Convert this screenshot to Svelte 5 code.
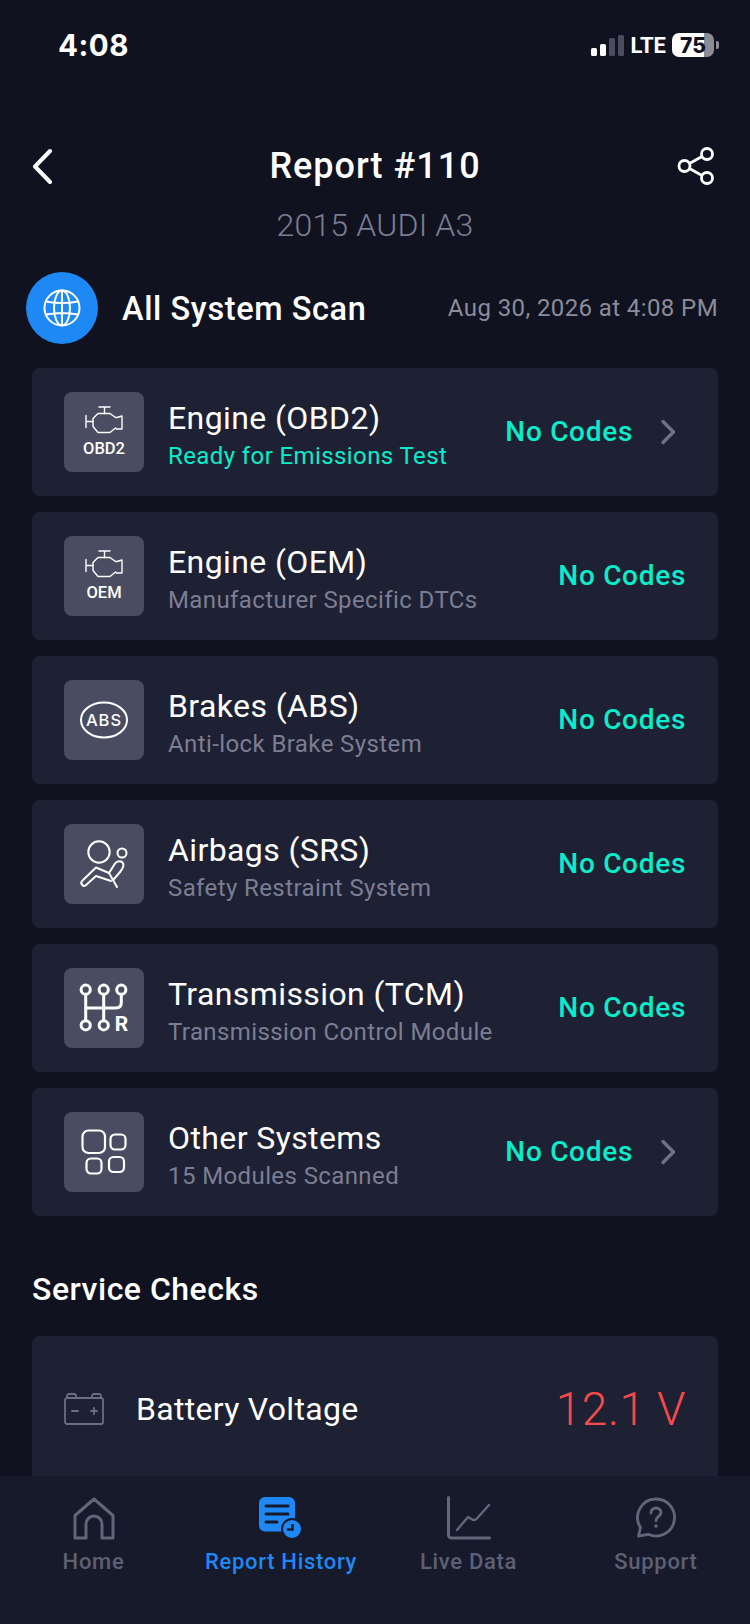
<script>
  const systems = [
    { id: "obd", title: "Engine (OBD2)", sub: "Ready for Emissions Test", ok: true, chevron: true, label: "OBD2" },
    { id: "oem", title: "Engine (OEM)", sub: "Manufacturer Specific DTCs", label: "OEM" },
    { id: "abs", title: "Brakes (ABS)", sub: "Anti-lock Brake System" },
    { id: "srs", title: "Airbags (SRS)", sub: "Safety Restraint System" },
    { id: "tcm", title: "Transmission (TCM)", sub: "Transmission Control Module" },
    { id: "other", title: "Other Systems", sub: "15 Modules Scanned", chevron: true },
  ];
</script>

{#snippet engine()}
  <svg viewBox="0 0 38 28" width="38" height="28" fill="none" stroke="#fff" stroke-width="1.400" stroke-linejoin="round" stroke-linecap="round">
    <path d="M14 1h11M19.500 1v6.500M1 9.500v12M1 15.500h7" />
    <path d="M8 12.500l5-5h12l5.500 4h1.500l5-1.500v13h-5.500l-1-1-5.500 4.500H13l-5-6z" />
  </svg>
{/snippet}

<div class="page">
  <div class="status">
    <span class="time">4:08</span>
    <div class="status-right">
      <svg width="33" height="21" viewBox="0 0 33 21">
        <rect x="0" y="13" width="6" height="8" rx="1.500" fill="#fff" />
        <rect x="9" y="9" width="6" height="12" rx="1.500" fill="#fff" />
        <rect x="18" y="3" width="6" height="18" rx="1.500" fill="#4b4d5c" />
        <rect x="27" y="0" width="6" height="21" rx="1.500" fill="#4b4d5c" />
      </svg>
      <span class="lte">LTE</span>
      <div class="battery"><span class="level">75</span></div>
      <span class="nub"></span>
    </div>
  </div>

  <header class="nav">
    <svg width="26" height="36" viewBox="0 0 26 36" fill="none" stroke="#fff" stroke-width="4" stroke-linecap="round" stroke-linejoin="round">
      <path d="M20 3 5 18.500 20 34" />
    </svg>
    <h1>Report #110</h1>
    <svg class="share" width="38" height="38" viewBox="0 0 38 38" fill="none" stroke="#fff" stroke-width="2.800">
      <circle cx="7.500" cy="19" r="5.500" />
      <circle cx="30" cy="7" r="5.500" />
      <circle cx="30" cy="31" r="5.500" />
      <path d="M12.500 16.500 25 9.500M12.500 21.500 25 28.500" />
    </svg>
  </header>
  <p class="vehicle">2015 AUDI A3</p>

  <div class="scan">
    <div class="globe">
      <svg width="40" height="40" viewBox="0 0 40 40" fill="none" stroke="#fff" stroke-width="2">
        <circle cx="20" cy="20" r="17.500" />
        <ellipse cx="20" cy="20" rx="8" ry="17.500" />
        <path d="M4 13.500c10 2 22 2 32 0M4 26.500c10-2 22-2 32 0M20 2.500v35" />
      </svg>
    </div>
    <span class="scan-title">All System Scan</span>
    <span class="scan-date">Aug 30, 2026 at 4:08 PM</span>
  </div>

  <div class="list">
    {#each systems as s}
      <div class="card">
        <div class="tile">
          {#if s.label}
            {@render engine()}
            <span class="tile-label">{s.label}</span>
          {:else if s.id === "abs"}
            <svg width="80" height="80" viewBox="0 0 80 80" fill="none">
              <ellipse cx="40" cy="40" rx="23" ry="17.500" stroke="#fff" stroke-width="2" />
              <text class="abs" x="40" y="46" text-anchor="middle">ABS</text>
            </svg>
          {:else if s.id === "srs"}
            <svg width="80" height="80" viewBox="0 0 80 80" fill="none" stroke="#fff" stroke-width="2" stroke-linecap="round" stroke-linejoin="round">
              <circle cx="35" cy="28" r="10.700" />
              <circle cx="58" cy="29" r="4.500" />
              <path d="M45 49 32 43.500 18 57c-2 2.500 1 6 3.500 4.500L32 52l15 5" />
              <path d="M45 49l6-9.500c2-3 7-3 8.200.2 1 2.800-.7 5-2.700 7.800L50 55" />
              <path d="M45 49l8 14" />
            </svg>
          {:else if s.id === "tcm"}
            <svg width="80" height="80" viewBox="0 0 80 80" fill="none" stroke="#fff" stroke-width="3" stroke-linecap="round" stroke-linejoin="round">
              <circle cx="21.700" cy="21.700" r="4.600" />
              <circle cx="39.700" cy="21.700" r="4.600" />
              <circle cx="57.300" cy="21.700" r="4.600" />
              <circle cx="21.700" cy="57.300" r="4.600" />
              <circle cx="39.700" cy="57.300" r="4.600" />
              <path d="M21.700 26.300v26.400M39.700 26.300v26.400M21.700 40h30c3.500 0 5.600-2 5.600-5.500v-8.200" />
              <text class="gear" x="57.500" y="63" text-anchor="middle">R</text>
            </svg>
          {:else}
            <svg width="46" height="46" viewBox="0 0 46 46" fill="none" stroke="#fff" stroke-width="2.200">
              <rect x="1.500" y="1.500" width="22.500" height="22.500" rx="6" />
              <rect x="29.500" y="5.500" width="15" height="15" rx="4.500" />
              <rect x="5.500" y="29.500" width="15" height="15" rx="4.500" />
              <rect x="28" y="28" width="15" height="15" rx="4.500" />
            </svg>
          {/if}
        </div>
        <div class="text">
          <div class="title">{s.title}</div>
          <div class="sub" class:ok={s.ok}>{s.sub}</div>
        </div>
        <span class="codes">No Codes</span>
        {#if s.chevron}
          <svg class="chev" width="18" height="26" viewBox="0 0 18 26" fill="none" stroke="#6f7186" stroke-width="3.400" stroke-linecap="round" stroke-linejoin="round">
            <path d="M4 2.500 14.500 13 4 23.500" />
          </svg>
        {/if}
      </div>
    {/each}
  </div>

  <h2>Service Checks</h2>

  <div class="service">
    <svg width="40" height="32" viewBox="0 0 40 32" fill="none" stroke="#6b6d82" stroke-width="1.800" stroke-linecap="round" stroke-linejoin="round">
      <path d="M3 5h34a2 2 0 0 1 2 2v22a2 2 0 0 1-2 2H3a2 2 0 0 1-2-2V7a2 2 0 0 1 2-2z" />
      <path d="M3 5V3a2 2 0 0 1 2-2h5a2 2 0 0 1 2 2v2M28 5V3a2 2 0 0 1 2-2h5a2 2 0 0 1 2 2v2" />
      <path d="M8 18h6M27 18h6M30 15v6" />
    </svg>
    <span class="service-name">Battery Voltage</span>
    <span class="volt">12.1 V</span>
  </div>

  <nav class="tabs">
    <div class="tab">
      <svg width="44" height="44" viewBox="0 0 44 44" fill="none" stroke="#63657a" stroke-width="3" stroke-linejoin="round">
        <path d="M3 42V19.500L22 3l19 16.500V42H30V28a8 8 0 0 0-16 0v14z" />
      </svg>
      <span>Home</span>
    </div>
    <div class="tab active">
      <svg width="44" height="44" viewBox="0 0 44 44">
        <rect x="0" y="1" width="36" height="34.500" rx="6" fill="#1e88f5" />
        <path d="M7 10h22M7 18h22M7 26h11" stroke="#171a2a" stroke-width="3" stroke-linecap="round" />
        <circle cx="33" cy="33" r="10" fill="#1e88f5" stroke="#171a2a" stroke-width="2" />
        <path d="M33.500 28v5.500H28" fill="none" stroke="#171a2a" stroke-width="2.500" />
      </svg>
      <span>Report History</span>
    </div>
    <div class="tab">
      <svg width="44" height="44" viewBox="0 0 44 44" fill="none" stroke="#63657a" stroke-width="3" stroke-linecap="round" stroke-linejoin="round">
        <path d="M1.500 1.500V39a3 3 0 0 0 3 3h38" />
        <path d="M10 34l11-13 5 3 3-.5L42 9" stroke-width="2.400" />
      </svg>
      <span>Live Data</span>
    </div>
    <div class="tab">
      <svg width="44" height="44" viewBox="0 0 44 44" fill="none" stroke="#63657a" stroke-width="2.800" stroke-linejoin="round">
        <path d="M22 3a18.500 18.500 0 1 1-7.500 35.400L4.500 40l2-8.500A18.500 18.500 0 0 1 22 3z" />
        <path d="M17 17c0-3 2.200-5 5-5s5 2 5 4.600c0 3.800-5 3.800-5 8.200" stroke-linecap="round" />
        <circle cx="22" cy="30" r="1.800" fill="#63657a" stroke="none" />
      </svg>
      <span>Support</span>
    </div>
  </nav>
</div>

<style>
  :global(body) {
    margin: 0;
    background: #10131f;
  }

  .page {
    position: relative;
    width: 750px;
    height: 1624px;
    overflow: hidden;
    background: #10131f;
    color: #fff;
    font-family: Roboto, "Liberation Sans", sans-serif;
  }

  .status {
    height: 90px;
    box-sizing: border-box;
    padding: 0 31px 0 58px;
    display: flex;
    justify-content: space-between;
    align-items: center;
  }

  .time {
    font-family: Inter, sans-serif;
    font-size: 29.500px;
    font-weight: 700;
    letter-spacing: 0.5px;
  }

  .status-right {
    display: flex;
    align-items: center;
  }

  .lte {
    margin-left: 7px;
    font-size: 22px;
    font-weight: 700;
  }

  .battery {
    margin-left: 6px;
    width: 42px;
    height: 24px;
    border-radius: 7px;
    background: linear-gradient(90deg, #fff 0 76%, #8b8c95 76%);
    display: flex;
    justify-content: center;
    align-items: center;
  }

  .level {
    color: #10131f;
    font-family: Inter, sans-serif;
    font-size: 21px;
    font-weight: 800;
    line-height: 1;
  }

  .nub {
    margin-left: 2px;
    width: 3px;
    height: 8px;
    border-radius: 0 2px 2px 0;
    background: #8b8c95;
  }

  .nav {
    height: 60px;
    margin-top: 46px;
    padding: 0 35px 0 30px;
    display: grid;
    grid-template-columns: 1fr auto 1fr;
    align-items: center;
  }

  .share {
    justify-self: end;
  }

  h1 {
    margin: 0 0 0 5px;
    font-size: 36px;
    font-weight: 500;
    letter-spacing: 1px;
  }

  .vehicle {
    margin: 7px 0 0;
    color: #7b7e93;
    font-size: 32px;
    font-weight: 300;
    line-height: 44px;
    letter-spacing: 0.2px;
    text-align: center;
  }

  .scan {
    margin-top: 25px;
    padding: 0 32px 0 26px;
    display: flex;
    align-items: center;
  }

  .globe {
    width: 72px;
    height: 72px;
    border-radius: 50%;
    background: #1e88f5;
    display: flex;
    justify-content: center;
    align-items: center;
  }

  .scan-title {
    margin-left: 24px;
    padding-top: 2px;
    font-size: 32.500px;
    font-weight: 500;
    letter-spacing: 0.6px;
  }

  .scan-date {
    margin-left: auto;
    color: #8a8c9b;
    font-size: 24px;
    letter-spacing: 0.4px;
  }

  .list {
    margin: 24px 32px 0;
    display: flex;
    flex-direction: column;
    gap: 16px;
  }

  .card {
    height: 128px;
    box-sizing: border-box;
    padding: 0 32px;
    border-radius: 8px;
    background: #1e2133;
    display: flex;
    align-items: center;
  }

  .tile {
    flex: none;
    width: 80px;
    height: 80px;
    border-radius: 8px;
    background: #4a4d62;
    display: flex;
    flex-direction: column;
    justify-content: center;
    align-items: center;
  }

  .tile-label {
    margin-top: 6px;
    font-size: 16.500px;
    font-weight: 500;
    line-height: 18px;
  }

  .abs {
    fill: #fff;
    font-family: Inter, sans-serif;
    font-size: 16.500px;
    font-weight: 500;
    letter-spacing: 1px;
  }

  .gear {
    fill: #fff;
    stroke: none;
    font-size: 21px;
    font-weight: 700;
  }

  .text {
    margin-left: 24px;
    padding-top: 4px;
    flex: 1;
    min-width: 0;
  }

  .title {
    font-size: 32px;
    line-height: 40px;
    letter-spacing: 0.4px;
  }

  .sub {
    margin-top: 3px;
    color: #7b7e93;
    font-size: 24px;
    line-height: 30px;
    letter-spacing: 0.4px;
  }

  .sub.ok {
    color: #0aecca;
  }

  .codes {
    margin-bottom: 1px;
    color: #0aecca;
    font-size: 28px;
    font-weight: 500;
    letter-spacing: 0.7px;
  }

  .chev {
    margin-left: 26px;
    margin-right: 9px;
  }

  h2 {
    margin: 53px 32px 0;
    font-size: 32px;
    font-weight: 500;
    line-height: 40px;
    letter-spacing: 0.5px;
  }

  .service {
    margin: 27px 32px 0;
    height: 146px;
    box-sizing: border-box;
    padding: 0 32px;
    border-radius: 8px;
    background: #1e2133;
    display: flex;
    align-items: center;
  }

  .service-name {
    margin-left: 32px;
    font-size: 32px;
    letter-spacing: 0.3px;
  }

  .volt {
    margin-left: auto;
    color: #f84a4a;
    font-size: 46px;
    font-weight: 300;
    letter-spacing: 0.5px;
  }

  .tabs {
    position: absolute;
    left: 0;
    right: 0;
    bottom: 0;
    height: 148px;
    padding-top: 20px;
    box-sizing: border-box;
    background: #171a2a;
    display: grid;
    grid-template-columns: 187px 188px 187px 188px;
  }

  .tab {
    display: flex;
    flex-direction: column;
    align-items: center;
    color: #5d6075;
    font-size: 22px;
    font-weight: 500;
    letter-spacing: 0.7px;
  }

  .tab span {
    margin-top: 9px;
  }

  .tab.active {
    color: #1e88f5;
  }
</style>
